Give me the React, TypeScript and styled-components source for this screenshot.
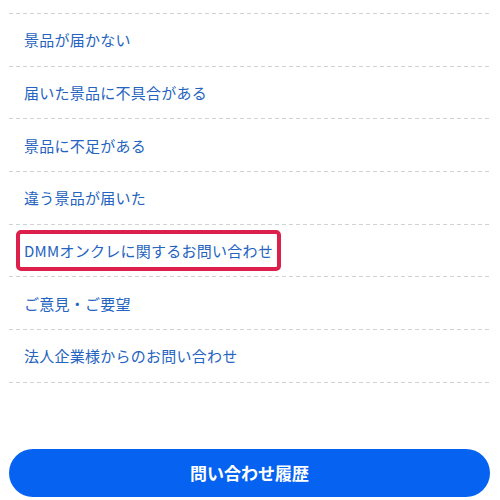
import React from 'react';
import styled, { createGlobalStyle } from 'styled-components';

const GlobalStyle = createGlobalStyle`
    html, body {
        margin: 0;
        padding: 0;
        background: #ffffff;
    }
    body {
        font-family: 'Noto Sans CJK JP', 'Noto Sans', sans-serif;
    }
`;

const Page = styled.div`
    width: 500px;
    height: 500px;
    box-sizing: border-box;
    padding: 13px 10px 0 9px;
    display: flex;
    flex-direction: column;
    overflow: hidden;
`;

const MenuList = styled.ul`
    list-style: none;
    margin: 0;
    padding: 0;
    background-image: repeating-linear-gradient(to right, #d2d2d2 0 4px, transparent 4px 7px);
    background-size: 100% 1px;
    background-repeat: no-repeat;
    background-position: top left;
    padding-top: 1px;
`;

const MenuItem = styled.li`
    height: 51.7px;
    display: flex;
    align-items: center;
    padding-left: 15px;
    background-image: repeating-linear-gradient(to right, #d2d2d2 0 4px, transparent 4px 7px);
    background-size: 100% 1px;
    background-repeat: no-repeat;
    background-position: bottom left;
    padding-bottom: 1px;
`;

const MenuLink = styled.a`
    color: #2563c0;
    font-size: 15px;
    line-height: 33px;
    text-decoration: none;
    letter-spacing: 0.25px;
`;

const Highlight = styled.span`
    display: inline-flex;
    align-items: center;
    margin-left: -8px;
    padding: 0 4px;
    border: 4px solid #dc1f4b;
    border-radius: 5px;
`;

const HistoryButton = styled.button`
    margin-top: 66px;
    height: 48px;
    width: 100%;
    border: none;
    border-radius: 24px;
    background: #0662f0;
    color: #ffffff;
    font-family: 'Noto Sans CJK JP', 'Noto Sans', sans-serif;
    font-size: 17px;
    font-weight: 700;
    cursor: pointer;
`;

const items = [
    { label: '景品が届かない' },
    { label: '届いた景品に不具合がある' },
    { label: '景品に不足がある' },
    { label: '違う景品が届いた' },
    { label: 'DMMオンクレに関するお問い合わせ', marked: true },
    { label: 'ご意見・ご要望' },
    { label: '法人企業様からのお問い合わせ' },
];

const App = () => {
    return (
        <>
            <GlobalStyle />
            <Page>
                <MenuList>
                    {items.map((item, idx) => (
                        <MenuItem key={idx}>
                            {item.marked ? (
                                <Highlight>
                                    <MenuLink href="#">{item.label}</MenuLink>
                                </Highlight>
                            ) : (
                                <MenuLink href="#">{item.label}</MenuLink>
                            )}
                        </MenuItem>
                    ))}
                </MenuList>
                <HistoryButton>問い合わせ履歴</HistoryButton>
            </Page>
        </>
    );
};

export default App;
